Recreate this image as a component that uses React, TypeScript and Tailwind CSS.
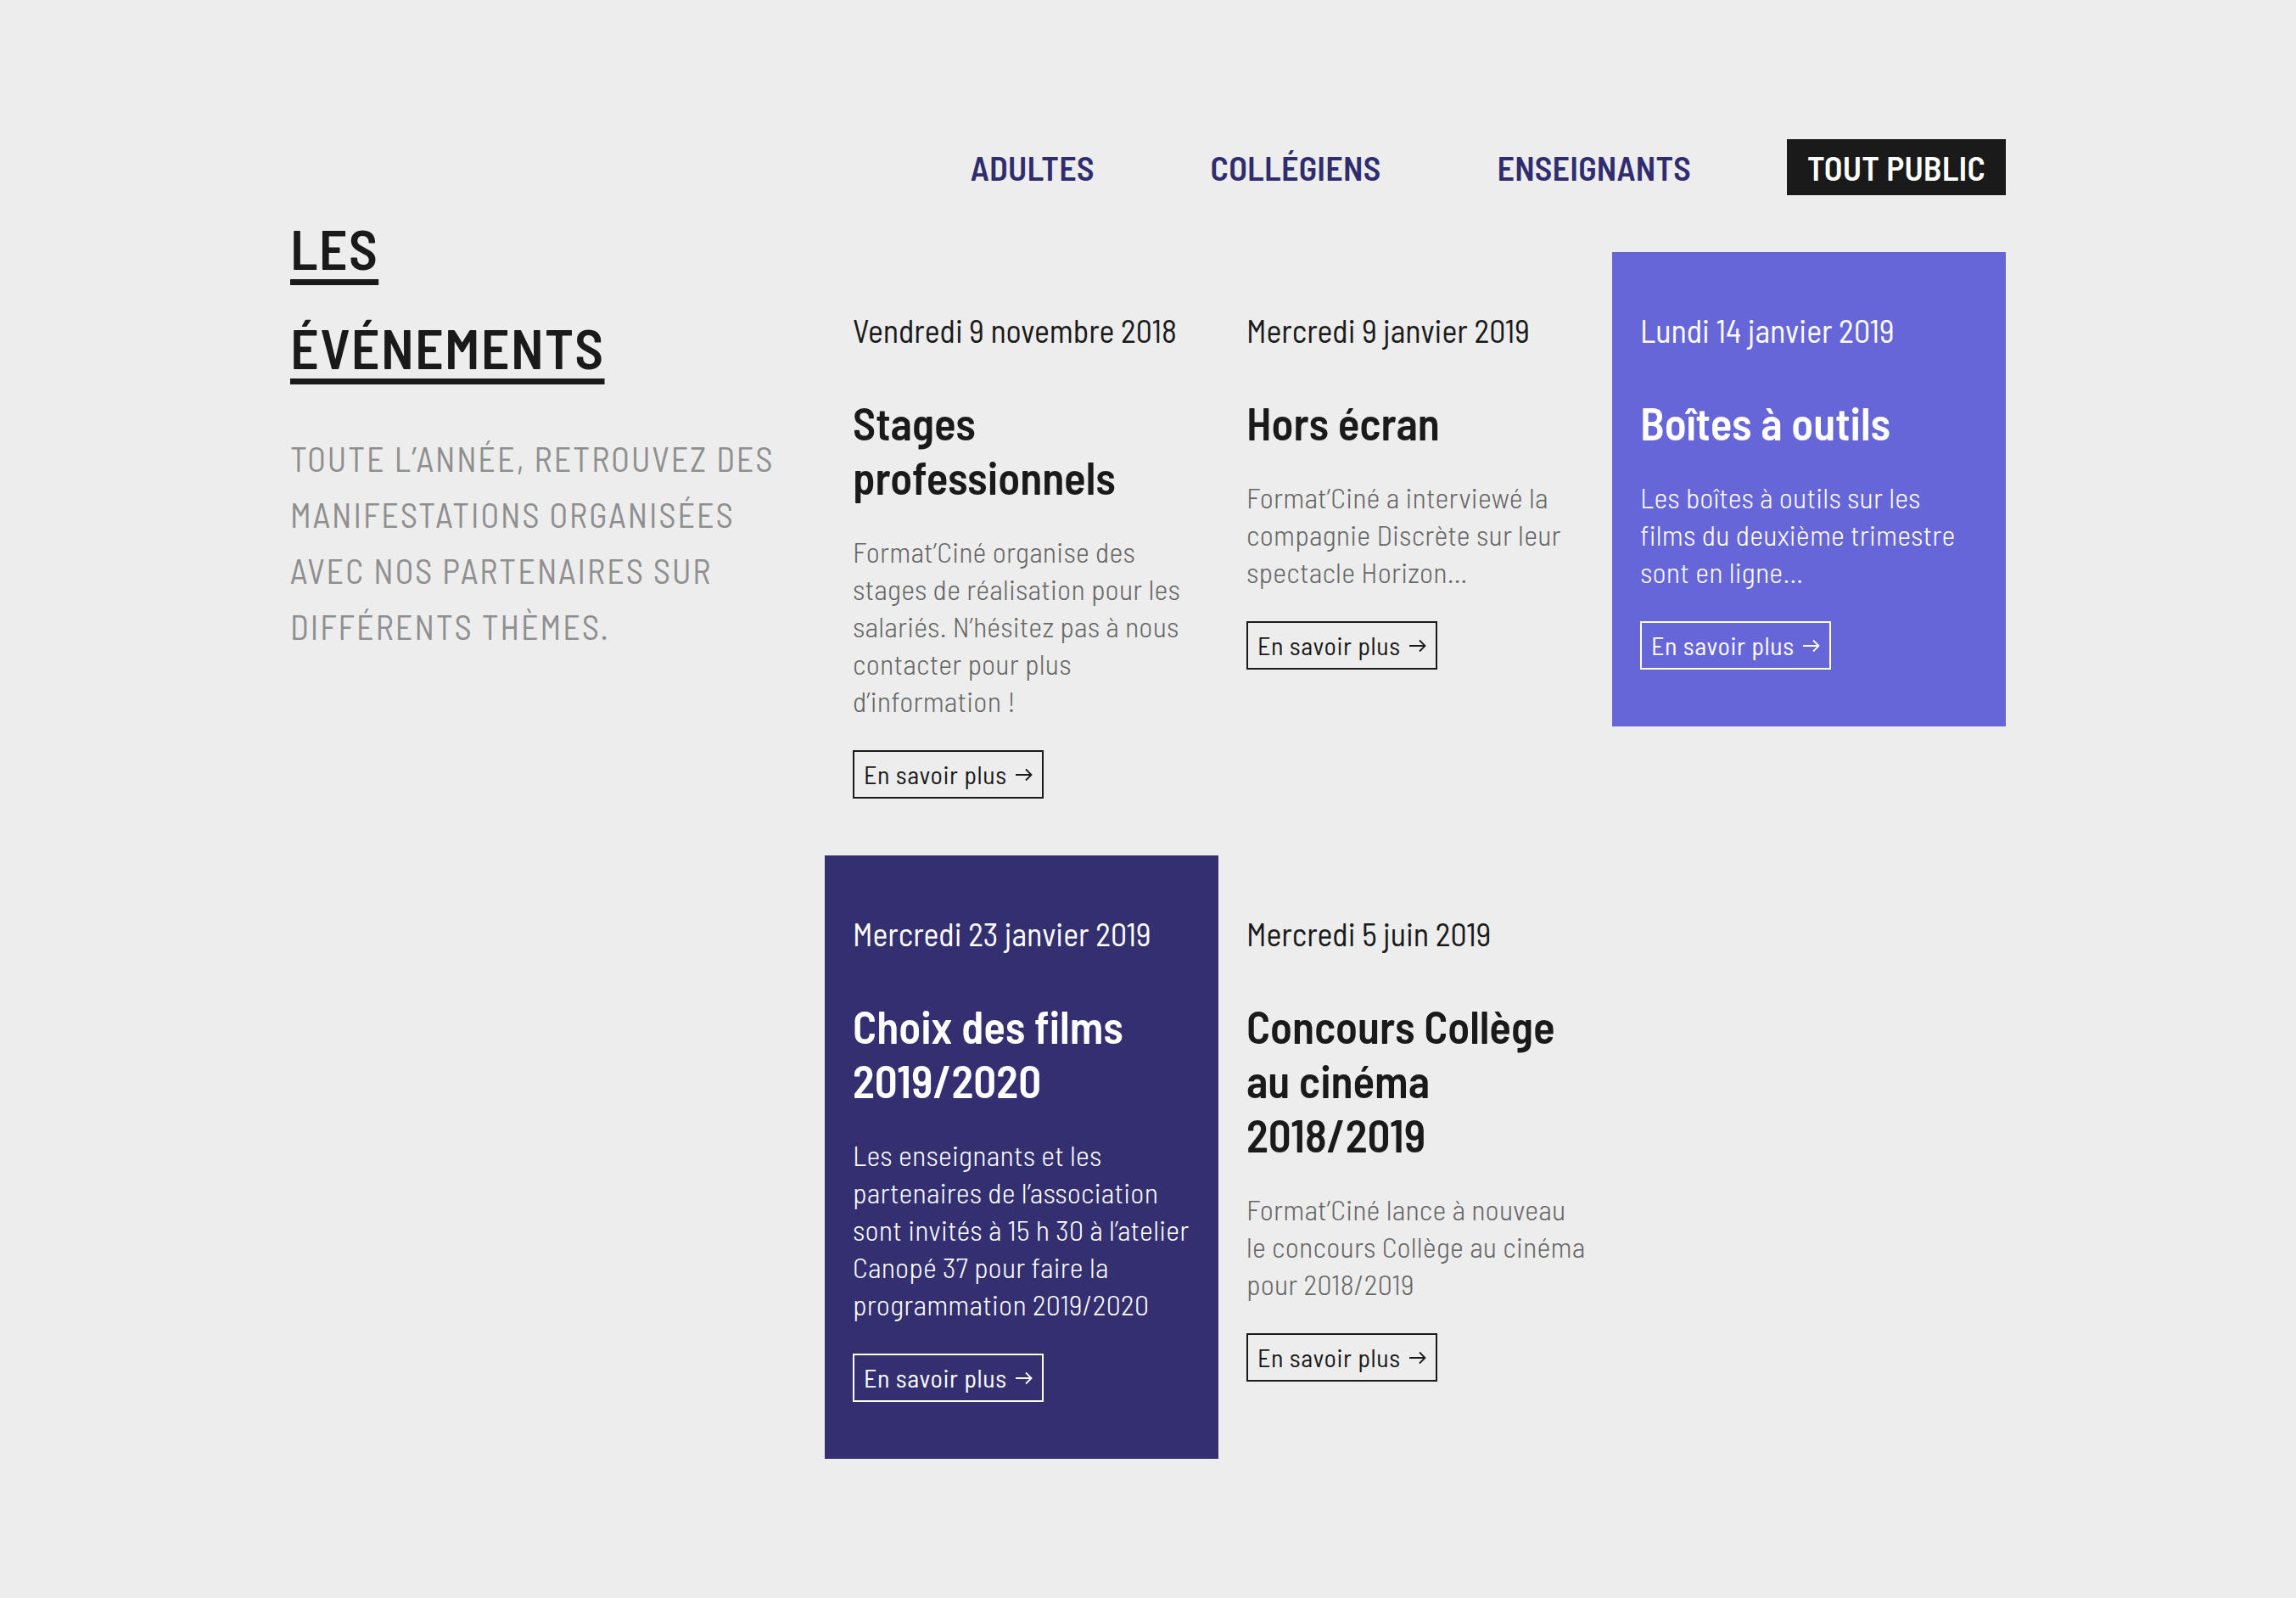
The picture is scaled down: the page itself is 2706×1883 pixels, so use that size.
type Event = {
  date: string;
  title: string[];
  text: string;
  tone: "light" | "purple" | "navy";
};

const events: Event[] = [
  {
    date: "Vendredi 9 novembre 2018",
    title: ["Stages", "professionnels"],
    text: "Format’Ciné organise des stages de réalisation pour les salariés. N’hésitez pas à nous contacter pour plus d’information !",
    tone: "light",
  },
  {
    date: "Mercredi 9 janvier 2019",
    title: ["Hors écran"],
    text: "Format’Ciné a interviewé la compagnie Discrète sur leur spectacle Horizon…",
    tone: "light",
  },
  {
    date: "Lundi 14 janvier 2019",
    title: ["Boîtes à outils"],
    text: "Les boîtes à outils sur les films du deuxième trimestre sont en ligne…",
    tone: "purple",
  },
  {
    date: "Mercredi 23 janvier 2019",
    title: ["Choix des films", "2019/2020"],
    text: "Les enseignants et les partenaires de l’association sont invités à 15 h 30 à l’atelier Canopé 37 pour faire la programmation 2019/2020",
    tone: "navy",
  },
  {
    date: "Mercredi 5 juin 2019",
    title: ["Concours Collège", "au cinéma", "2018/2019"],
    text: "Format’Ciné lance à nouveau le concours Collège au cinéma pour 2018/2019",
    tone: "light",
  },
];

function Arrow() {
  return (
    <svg viewBox="0 0 20 16" className="ml-[10px] w-[20px] h-[16px]" fill="none" stroke="currentColor" strokeWidth="1.8">
      <path d="M0 8h18.5M12 1.5l6.5 6.5-6.5 6.5" />
    </svg>
  );
}

function Card({ ev }: { ev: Event }) {
  const colored = ev.tone !== "light";
  const bg = ev.tone === "purple" ? "bg-[#6766d9]" : ev.tone === "navy" ? "bg-[#332f70]" : "";
  return (
    <div className={`${bg} pl-[33px] pr-[30px] pt-[69px] pb-[67px]`}>
      <p className={`text-[38px] leading-[46px] ${colored ? "text-white" : "text-[#1a1a1a]"}`}>{ev.date}</p>
      <h3 className={`mt-[54px] text-[53px] leading-[64px] font-semibold ${colored ? "text-white" : "text-[#1a1a1a]"}`}>
        {ev.title.map((t) => (
          <span key={t} className="block">{t}</span>
        ))}
      </h3>
      <p
        className={`mt-[34px] text-[34px] leading-[44px] tracking-[0.007em] font-light ${
          colored ? "text-white" : "text-[#666666]"
        }`}
      >
        {ev.text}
      </p>
      <button
        type="button"
        className={`mt-[36px] flex items-center border-2 px-[11px] py-[8px] text-[30px] leading-[37px] tracking-[0.02em] ${
          colored ? "border-white text-white" : "border-[#1a1a1a] text-[#1a1a1a]"
        }`}
      >
        En savoir plus
        <Arrow />
      </button>
    </div>
  );
}

export default function App() {
  const tabs = ["ADULTES", "COLLÉGIENS", "ENSEIGNANTS", "TOUT PUBLIC"];
  return (
    <div className="min-h-screen bg-[#ededed] font-['Barlow_Semi_Condensed','Barlow','Roboto_Condensed',sans-serif]">
      <div className="ml-[342px] w-[2022px] pt-[164px] pb-[160px]">
        <nav className="flex justify-end gap-[89px]">
          {tabs.map((t) => (
            <a
              key={t}
              className={`px-[24px] py-[9px] text-[40px] leading-[48px] font-semibold tracking-[0.005em] ${
                t === "TOUT PUBLIC" ? "bg-[#1a1a1a] text-white" : "text-[#2f2c6f]"
              }`}
            >
              {t}
            </a>
          ))}
        </nav>

        <div className="flex mt-[3px]">
          <div className="w-[630px] shrink-0">
            <h1 className="text-[66px] leading-[117px] font-semibold tracking-[0.02em] text-[#1a1a1a]">
              <span className="underline decoration-[7px] underline-offset-[11px]">LES</span>
              <br />
              <span className="underline decoration-[7px] underline-offset-[11px]">ÉVÉNEMENTS</span>
            </h1>
            <p className="mt-[40px] w-[600px] text-[40px] leading-[66px] tracking-[0.05em] text-[#8f8f8f]">
              TOUTE L’ANNÉE, RETROUVEZ DES MANIFESTATIONS ORGANISÉES AVEC NOS PARTENAIRES SUR DIFFÉRENTS THÈMES.
            </p>
          </div>

          <div className="grid w-[1392px] grid-cols-3 items-start pt-[64px]">
            {events.map((ev) => (
              <Card key={ev.date} ev={ev} />
            ))}
          </div>
        </div>
      </div>
    </div>
  );
}
